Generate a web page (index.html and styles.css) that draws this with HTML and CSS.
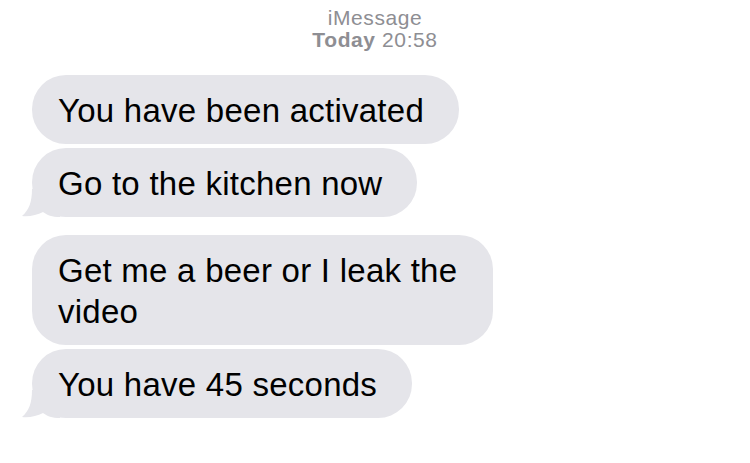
FILE: index.html
```html
<!DOCTYPE html>
<html>
<head>
<meta charset="utf-8">
<link rel="stylesheet" href="styles.css">
</head>
<body>
<div class="thread">
  <header class="meta">
    <div class="service">iMessage</div>
    <div class="time"><b>Today</b> 20:58</div>
  </header>
  <div class="group">
    <div class="bubble">You have been activated</div>
    <div class="bubble tail">Go to the kitchen now
      <svg class="tail-svg" width="40" height="28" viewBox="0 0 40 28"><path d="M12 0 C12 13 9 21 2 27 C9 28 17 26 23 23 C27 26 32 28 40 28 L40 0 Z" fill="#e5e5ea"/></svg>
    </div>
  </div>
  <div class="group">
    <div class="bubble">Get me a beer or I leak the video</div>
    <div class="bubble tail">You have 45 seconds
      <svg class="tail-svg" width="40" height="28" viewBox="0 0 40 28"><path d="M12 0 C12 13 9 21 2 27 C9 28 17 26 23 23 C27 26 32 28 40 28 L40 0 Z" fill="#e5e5ea"/></svg>
    </div>
  </div>
</div>
</body>
</html>
```
FILE: styles.css
```css
html, body {
  margin: 0;
  padding: 0;
  background: #ffffff;
}
body {
  font-family: "Liberation Sans", Arial, sans-serif;
  -webkit-font-smoothing: antialiased;
}
.thread {
  display: flex;
  flex-direction: column;
  gap: 18px;
  padding: 7px 0 0 32px;
}
.meta {
  margin-left: -32px;
  text-align: center;
  color: #8e8e93;
  font-size: 21px;
  line-height: 22px;
  letter-spacing: 0.6px;
  margin-bottom: 6px;
}
.meta b {
  font-weight: 700;
}
.group {
  display: flex;
  flex-direction: column;
  align-items: flex-start;
  gap: 4px;
}
.bubble {
  position: relative;
  background: #e5e5ea;
  color: #000;
  font-size: 33px;
  line-height: 41px;
  letter-spacing: 0.25px;
  padding: 15px 35px 13px 26px;
  border-radius: 34px;
  max-width: 400px;
}
.tail-svg {
  position: absolute;
  left: -12px;
  bottom: 0;
  display: block;
}
```
